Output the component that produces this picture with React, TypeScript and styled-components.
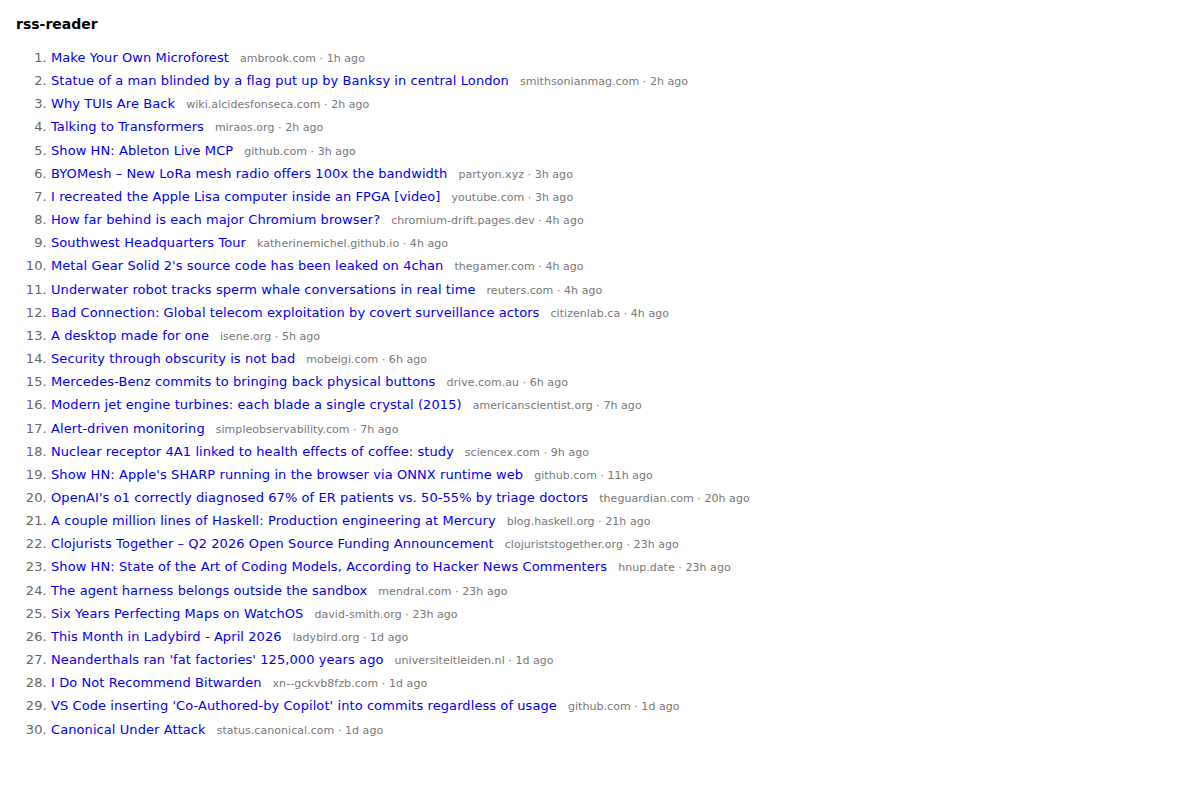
import React from "react";
import styled, { createGlobalStyle } from "styled-components";

const GlobalStyle = createGlobalStyle`
  body {
    margin: 0;
    background: #fff;
    font-family: "DejaVu Sans", Verdana, sans-serif;
  }
`;

const Page = styled.div`
  padding: 16px;
`;

const Title = styled.h1`
  font-size: 14px;
  line-height: 17px;
  font-weight: bold;
  color: #000;
  margin: 0 0 16px 0;
`;

const List = styled.ol`
  margin: 0;
  padding-left: 35px;
`;

const Item = styled.li`
  font-size: 13px;
  line-height: 18px;
  letter-spacing: 0.08px;
  margin-bottom: 5.17px;
  color: #666;
`;

const Link = styled.a`
  color: #00e;
  text-decoration: none;
`;

const Meta = styled.span`
  font-size: 11px;
  line-height: 1;
  letter-spacing: 0.05px;
  color: #777;
  margin-left: 11px;
`;

type Story = { title: string; site: string; age: string };

const stories: Story[] = [
  { title: "Make Your Own Microforest", site: "ambrook.com", age: "1h ago" },
  { title: "Statue of a man blinded by a flag put up by Banksy in central London", site: "smithsonianmag.com", age: "2h ago" },
  { title: "Why TUIs Are Back", site: "wiki.alcidesfonseca.com", age: "2h ago" },
  { title: "Talking to Transformers", site: "miraos.org", age: "2h ago" },
  { title: "Show HN: Ableton Live MCP", site: "github.com", age: "3h ago" },
  { title: "BYOMesh – New LoRa mesh radio offers 100x the bandwidth", site: "partyon.xyz", age: "3h ago" },
  { title: "I recreated the Apple Lisa computer inside an FPGA [video]", site: "youtube.com", age: "3h ago" },
  { title: "How far behind is each major Chromium browser?", site: "chromium-drift.pages.dev", age: "4h ago" },
  { title: "Southwest Headquarters Tour", site: "katherinemichel.github.io", age: "4h ago" },
  { title: "Metal Gear Solid 2's source code has been leaked on 4chan", site: "thegamer.com", age: "4h ago" },
  { title: "Underwater robot tracks sperm whale conversations in real time", site: "reuters.com", age: "4h ago" },
  { title: "Bad Connection: Global telecom exploitation by covert surveillance actors", site: "citizenlab.ca", age: "4h ago" },
  { title: "A desktop made for one", site: "isene.org", age: "5h ago" },
  { title: "Security through obscurity is not bad", site: "mobeigi.com", age: "6h ago" },
  { title: "Mercedes-Benz commits to bringing back physical buttons", site: "drive.com.au", age: "6h ago" },
  { title: "Modern jet engine turbines: each blade a single crystal (2015)", site: "americanscientist.org", age: "7h ago" },
  { title: "Alert-driven monitoring", site: "simpleobservability.com", age: "7h ago" },
  { title: "Nuclear receptor 4A1 linked to health effects of coffee: study", site: "sciencex.com", age: "9h ago" },
  { title: "Show HN: Apple's SHARP running in the browser via ONNX runtime web", site: "github.com", age: "11h ago" },
  { title: "OpenAI's o1 correctly diagnosed 67% of ER patients vs. 50-55% by triage doctors", site: "theguardian.com", age: "20h ago" },
  { title: "A couple million lines of Haskell: Production engineering at Mercury", site: "blog.haskell.org", age: "21h ago" },
  { title: "Clojurists Together – Q2 2026 Open Source Funding Announcement", site: "clojuriststogether.org", age: "23h ago" },
  { title: "Show HN: State of the Art of Coding Models, According to Hacker News Commenters", site: "hnup.date", age: "23h ago" },
  { title: "The agent harness belongs outside the sandbox", site: "mendral.com", age: "23h ago" },
  { title: "Six Years Perfecting Maps on WatchOS", site: "david-smith.org", age: "23h ago" },
  { title: "This Month in Ladybird - April 2026", site: "ladybird.org", age: "1d ago" },
  { title: "Neanderthals ran 'fat factories' 125,000 years ago", site: "universiteitleiden.nl", age: "1d ago" },
  { title: "I Do Not Recommend Bitwarden", site: "xn--gckvb8fzb.com", age: "1d ago" },
  { title: "VS Code inserting 'Co-Authored-by Copilot' into commits regardless of usage", site: "github.com", age: "1d ago" },
  { title: "Canonical Under Attack", site: "status.canonical.com", age: "1d ago" },
];

const App: React.FC = () => {
  return (
    <Page>
      <GlobalStyle />
      <Title>rss-reader</Title>
      <List>
        {stories.map((s, i) => (
          <Item key={i}>
            <Link href="#">{s.title}</Link>
            <Meta>
              {s.site} · {s.age}
            </Meta>
          </Item>
        ))}
      </List>
    </Page>
  );
};

export default App;
